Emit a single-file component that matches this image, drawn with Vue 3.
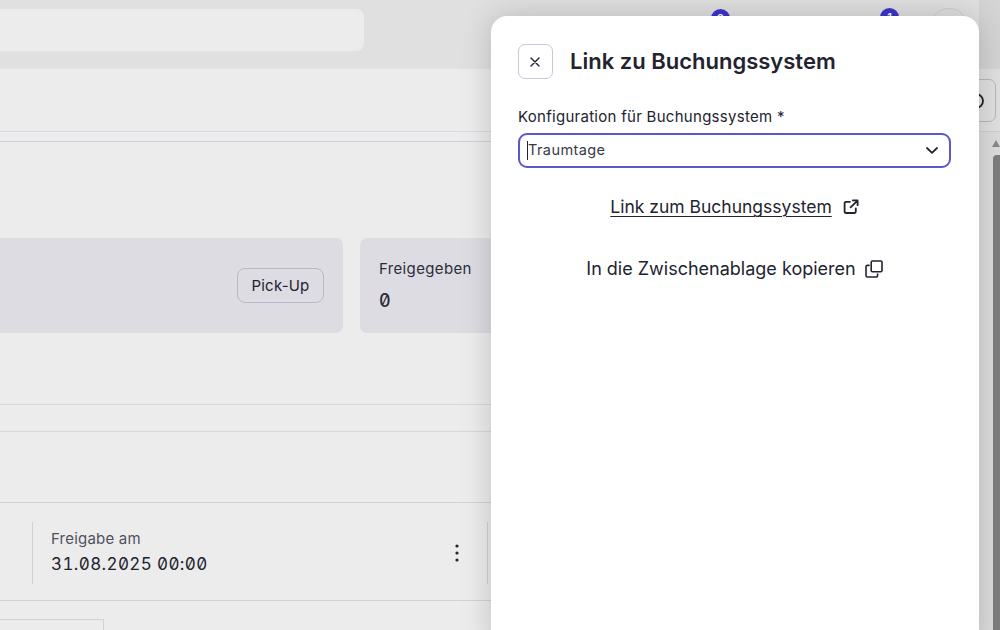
<script setup>
const selected = 'Traumtage'
</script>

<template>
  <div class="page">
    <header class="topbar">
      <div class="search"></div>
      <span class="badge badge-a">2</span>
      <span class="badge badge-b">1</span>
      <span class="avatar"></span>
    </header>
    <main class="main">
      <div class="toolbar">
        <button class="edge-btn">
          <svg width="16" height="16" viewBox="0 0 16 16" fill="none" stroke="#23232f" stroke-width="1.8"><circle cx="8" cy="8" r="7"/></svg>
        </button>
      </div>
      <div class="subrule"></div>
      <section class="cards">
        <div class="card card-wide">
          <button class="pill">Pick-Up</button>
        </div>
        <div class="card card-stat">
          <div class="stat-label">Freigegeben</div>
          <div class="stat-value">0</div>
        </div>
      </section>
      <div class="band-a"></div>
      <div class="band-b"></div>
      <section class="row">
        <div class="cell">
          <div class="cell-label">Freigabe am</div>
          <div class="cell-value">31.08.2025 00:00</div>
        </div>
        <svg class="kebab" width="4" height="18" viewBox="0 0 4 18"><circle cx="2" cy="2" r="1.6"/><circle cx="2" cy="9" r="1.6"/><circle cx="2" cy="16" r="1.6"/></svg>
        <div class="cell-end"></div>
      </section>
      <div class="tail"><div class="tail-box"></div></div>
    </main>
    <div class="right-shade"></div>
    <div class="scrollbar">
      <span class="scroll-up"></span>
      <span class="scroll-thumb"></span>
    </div>
    <aside class="drawer">
      <div class="drawer-head">
        <button class="close" aria-label="Schließen">
          <svg width="10" height="10" viewBox="0 0 10 10" fill="none" stroke="#23232f" stroke-width="1.4" stroke-linecap="round"><path d="M1 1l8 8M9 1L1 9"/></svg>
        </button>
        <h2 class="title">Link zu Buchungssystem</h2>
      </div>
      <label class="field-label">Konfiguration für Buchungssystem *</label>
      <div class="select">
        <span class="caret"></span>
        <span class="select-text">{{ selected }}</span>
        <svg class="chev" width="12" height="7" viewBox="0 0 12 7" fill="none" stroke="#23232f" stroke-width="1.8" stroke-linecap="round" stroke-linejoin="round"><path d="M1 1l5 4.8L11 1"/></svg>
      </div>
      <div class="action link-row">
        <a class="link">Link zum Buchungssystem</a>
        <svg width="16" height="16" viewBox="0 0 16 16" fill="none" stroke="#23232f" stroke-width="1.8" stroke-linecap="round" stroke-linejoin="round"><path d="M7 2.8H3a1.4 1.4 0 0 0-1.4 1.4v8.4A1.4 1.4 0 0 0 3 14h8.4a1.4 1.4 0 0 0 1.4-1.4V9.4"/><path d="M9.8 1.4h4.8v4.8M14.2 1.8L7.6 8.4"/></svg>
      </div>
      <div class="action copy-row">
        <span>In die Zwischenablage kopieren</span>
        <svg width="18" height="18" viewBox="0 0 18 18" fill="none" stroke="#23232f" stroke-width="1.6" stroke-linejoin="round" stroke-linecap="round"><rect x="6.2" y="1" width="10.8" height="10.8" rx="1.2"/><path d="M4 5.4H2.4A1.4 1.4 0 0 0 1 6.8v8.8A1.4 1.4 0 0 0 2.4 17h8.8a1.4 1.4 0 0 0 1.4-1.4V14"/></svg>
      </div>
    </aside>
  </div>
</template>

<style>
html, body { margin: 0; overflow: hidden; }
</style>

<style scoped>
.page {
  position: relative;
  width: 1000px;
  height: 630px;
  overflow: hidden;
  background: #ececec;
  font-family: Inter, "Liberation Sans", sans-serif;
  color: #23232f;
}
.topbar {
  position: relative;
  height: 69px;
  background: #e0e0e0;
  box-sizing: border-box;
  padding-top: 9px;
}
.search {
  width: 364px;
  height: 42px;
  background: #ececec;
  border-radius: 0 8px 8px 0;
}
.badge {
  position: absolute;
  top: 8px;
  width: 19px;
  height: 19px;
  border-radius: 50%;
  background: #3b35cc;
  color: #fff;
  font-size: 11px;
  line-height: 19px;
  text-align: center;
  font-weight: 600;
}
.badge-a { left: 711px; top: 9px; }
.badge-b { left: 880px; top: 8px; }
.avatar {
  position: absolute;
  left: 930px;
  top: 8px;
  width: 38px;
  height: 38px;
  box-sizing: border-box;
  border: 1px solid #cfcfd4;
  border-radius: 50%;
}
.main { position: relative; height: 561px; }
.toolbar {
  height: 63px;
  box-sizing: border-box;
  border-bottom: 1px solid #dbdae3;
  display: flex;
  justify-content: flex-end;
  padding: 10px 4px 0 0;
}
.edge-btn {
  width: 40px;
  height: 43px;
  box-sizing: border-box;
  border: 1px solid #c2c1ce;
  border-radius: 7px;
  background: transparent;
  display: flex;
  align-items: center;
  justify-content: center;
  padding: 0;
}
.subrule {
  height: 9px;
  border-bottom: 1px solid #cfcedb;
}
.cards {
  display: flex;
  gap: 17px;
  margin-top: 96px;
  height: 95px;
}
.card {
  background: #dcdce2;
  border-radius: 7px;
  box-sizing: border-box;
}
.card-wide {
  width: 343px;
  border-radius: 0 7px 7px 0;
  display: flex;
  justify-content: flex-end;
  align-items: center;
  padding-right: 19px;
}
.pill {
  width: 87px;
  height: 35px;
  box-sizing: border-box;
  border: 1px solid #b9b8c9;
  border-radius: 8px;
  background: transparent;
  font: 400 15px/1 Inter, sans-serif;
  letter-spacing: 0.2px;
  color: #23232f;
  padding: 0;
}
.card-stat {
  flex: 1;
  padding: 22px 0 0 19px;
}
.stat-label {
  font-size: 15px;
  font-weight: 400;
  line-height: 18px;
  letter-spacing: 0.35px;
  color: #2d2d3a;
}
.stat-value {
  margin-top: 13px;
  font: 500 18px/20px Inter, monospace;
  font-feature-settings: "tnum", "zero";
  color: #2d2d3a;
}
.band-a {
  height: 71px;
  border-bottom: 1px solid #d8d7e0;
}
.band-b {
  height: 26px;
  border-bottom: 1px solid #d8d7e0;
}
.row {
  margin-top: 70px;
  height: 99px;
  border-top: 1px solid #d3d2dc;
  border-bottom: 1px solid #d3d2dc;
  box-sizing: border-box;
  display: flex;
  align-items: center;
  padding-left: 32px;
}
.cell {
  height: 62px;
  box-sizing: border-box;
  border-left: 1px solid #d0d0d6;
  padding: 8px 0 0 18px;
  margin-top: 2px;
  width: 408px;
}
.cell-label {
  font-size: 15px;
  line-height: 18px;
  letter-spacing: 0.2px;
  color: #50505f;
}
.cell-value {
  margin-top: 6px;
  font: 400 17px/20px Inter, monospace;
  font-feature-settings: "tnum", "zero";
  letter-spacing: 0.38px;
  color: #23232f;
}
.kebab { fill: #23232f; margin: 2px 0 0 15px; }
.cell-end {
  height: 62px;
  margin: 2px 0 0 28px;
  border-left: 1px solid #cfcfd4;
}
.tail { padding-top: 18px; }
.tail-box {
  width: 104px;
  height: 20px;
  box-sizing: border-box;
  border-top: 1px solid #d3d2dc;
  border-right: 1px solid #d3d2dc;
}
.right-shade {
  position: absolute;
  left: 979px;
  top: 0;
  right: 0;
  bottom: 0;
  background: rgba(0, 0, 0, 0.05);
}
.scrollbar {
  position: absolute;
  right: 0;
  top: 132px;
  bottom: 0;
  width: 21px;
  background: #dcdcdc;
  box-sizing: border-box;
}
.scroll-up {
  position: absolute;
  right: 0;
  top: 8px;
  width: 0;
  height: 0;
  border-left: 4px solid transparent;
  border-right: 4px solid transparent;
  border-bottom: 7px solid #8a8a8a;
}
.scroll-thumb {
  position: absolute;
  right: 0;
  top: 23px;
  bottom: 0;
  width: 7px;
  background: #7d7d7d;
  border-radius: 4px 0 0 0;
}
.drawer {
  position: absolute;
  left: 491px;
  top: 16px;
  width: 488px;
  height: 640px;
  box-sizing: border-box;
  background: #fff;
  border-radius: 16px;
  padding: 28px 28px 0 27px;
  box-shadow: 0 0 30px rgba(0, 0, 0, 0.18);
}
.drawer-head {
  display: flex;
  align-items: center;
  gap: 18px;
  margin-bottom: 29px;
}
.close {
  width: 35px;
  height: 35px;
  box-sizing: border-box;
  border: 1px solid #c9c8d8;
  border-radius: 7px;
  background: #fff;
  display: flex;
  align-items: center;
  justify-content: center;
  padding: 0 1px 0 0;
}
.title {
  margin: -2px 0 0 -1px;
  font-size: 22px;
  font-weight: 600;
  line-height: 34px;
  color: #23232f;
}
.field-label {
  display: block;
  font-size: 15px;
  font-weight: 400;
  line-height: 18px;
  letter-spacing: 0.28px;
  margin-bottom: 7px;
  color: #23232f;
}
.select {
  position: relative;
  height: 35px;
  box-sizing: border-box;
  width: 433px;
  border: 2px solid #5b58c8;
  border-radius: 9px;
  display: flex;
  align-items: center;
  padding: 0 11px 0 7px;
}
.caret {
  width: 1px;
  height: 19px;
  background: #23232f;
}
.select-text {
  flex: 1;
  font-size: 14.5px;
  line-height: 18px;
  margin-top: -2px;
  color: #3a3a46;
  letter-spacing: 0.42px;
}
.action {
  display: flex;
  justify-content: center;
  align-items: center;
  line-height: 24px;
  color: #23232f;
  width: 433px;
}
.link-row { margin-top: 27px; gap: 11px; font-size: 17.5px; }
.link { text-decoration: underline; text-underline-offset: 3px; text-decoration-thickness: 1px; }
.copy-row { margin-top: 38px; gap: 9px; font-size: 18px; }
</style>
